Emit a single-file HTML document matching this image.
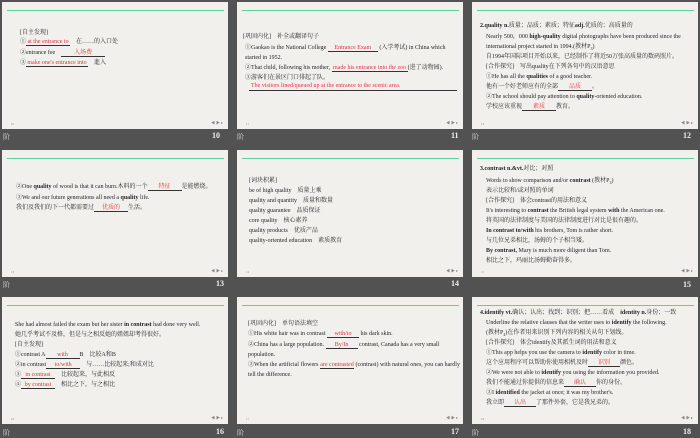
<!DOCTYPE html>
<html><head><meta charset="utf-8"><style>
*{margin:0;padding:0;box-sizing:border-box}
body{width:700px;height:438px;background:#525252;position:relative;overflow:hidden;font-family:"Liberation Serif","Noto Serif CJK SC",serif}
.s{position:absolute;width:226px;height:127px;background:#f1f0ec;overflow:hidden}
.s:before{content:"";position:absolute;left:5px;right:4px;top:8px;height:1px;background:#62cf98}
.t{position:absolute;font-size:6px;line-height:7px;white-space:nowrap;color:#262626}
.t sub{font-size:4px}
.r{color:#e8323a}
.b{display:inline-block;border-bottom:0.8px solid #333;text-align:center;color:#e8323a;line-height:6px}
.nav{position:absolute;right:5px;bottom:3px;font-size:4px;color:#888}
.pg{position:absolute;left:9px;bottom:3px;font-size:3px;color:#888}
.lab{position:absolute;font-size:7px;color:#ddd;font-family:"Liberation Serif","Noto Serif CJK SC",serif}
.num{position:absolute;font-size:8px;font-weight:bold;color:#eee;font-family:"Liberation Serif",serif}
</style></head><body>

<div class="s" style="left:2px;top:2px">
<div class="t" style="left:18px;top:28px">[自主发现]</div>
<div class="t" style="left:18px;top:37px">①<span class="b" style="width:44px">at the entrance to</span>　在……的入口处</div>
<div class="t" style="left:18px;top:48px">②entrance fee　<span class="b" style="width:44px">入场费</span></div>
<div class="t" style="left:18px;top:58px">③<span class="b" style="width:62px">make one's entrance into</span>　進入</div>
<div class="pg">10</div><div class="nav">◀ ▶ ▸</div></div>
<div class="lab" style="left:3px;top:132px">阶</div><div class="num" style="left:212px;top:131px">10</div>

<div class="s" style="left:237px;top:2px">
<div class="t" style="left:6px;top:32px">[巩固内化]　补全或翻译句子</div>
<div class="t" style="left:8px;top:43px">①Gaokao is the National College <span class="b" style="width:50px">Entrance Exam</span> (入学考试) in China which</div>
<div class="t" style="left:8px;top:53px">started in 1952.</div>
<div class="t" style="left:8px;top:63px">②That child, following his mother, <span class="b" style="width:76px">made his entrance into the zoo</span>(进了动物园).</div>
<div class="t" style="left:8px;top:73px">③游客们在景区门口排起了队。</div>
<div class="t r" style="left:12px;top:81px;border-bottom:0.8px solid #333;width:208px;padding-left:2px">The visitors lined/queued up at the entrance to the scenic area.</div>
<div class="pg">11</div><div class="nav">◀ ▶ ▸</div></div>
<div class="lab" style="left:237px;top:132px">阶</div><div class="num" style="left:451px;top:131px">11</div>

<div class="s" style="left:472px;top:2px">
<div class="t" style="left:8px;top:21px"><b>2.quality n.</b>质量；品质；素质；特征<b>adj.</b>优质的；高质量的</div>
<div class="t" style="left:14px;top:32px">Nearly 500，000 <b>high-quality</b> digital photographs have been produced since the</div>
<div class="t" style="left:14px;top:42px">international project started in 1994.(教材P<sub>3</sub>)</div>
<div class="t" style="left:14px;top:52px">自1994年国际项目开始以来，已经制作了将近50万张高质量的数码照片。</div>
<div class="t" style="left:14px;top:62px">[合作探究]　写出quality在下列各句中的汉语意思</div>
<div class="t" style="left:14px;top:72px">①He has all the <b>qualities</b> of a good teacher.</div>
<div class="t" style="left:14px;top:82px">他有一个好老师应有的全部<span class="b" style="width:34px">品质</span>。</div>
<div class="t" style="left:14px;top:92px">②The school should pay attention to <b>quality</b>-oriented education.</div>
<div class="t" style="left:14px;top:102px">学校应该重视<span class="b" style="width:34px">素质</span>教育。</div>
<div class="pg">12</div><div class="nav">◀ ▶ ▸</div></div>
<div class="lab" style="left:472px;top:132px">阶</div><div class="num" style="left:683px;top:131px">12</div>

<div class="s" style="left:2px;top:150px">
<div class="t" style="left:14px;top:34px">②One <b>quality</b> of wood is that it can burn.木料的一个<span class="b" style="width:34px">特征</span>是能燃烧。</div>
<div class="t" style="left:14px;top:45px">③We and our future generations all need a <b>quality</b> life.</div>
<div class="t" style="left:14px;top:55px">我们及我们的下一代都需要过<span class="b" style="width:34px">优质的</span>生活。</div>
<div class="pg">13</div><div class="nav">◀ ▶ ▸</div></div>
<div class="lab" style="left:3px;top:280px">阶</div><div class="num" style="left:216px;top:279px">13</div>

<div class="s" style="left:237px;top:150px">
<div class="t" style="left:12px;top:28px">[词块积累]</div>
<div class="t" style="left:12px;top:38px">be of high quality　质量上乘</div>
<div class="t" style="left:12px;top:48px">quality and quantity　质量和数量</div>
<div class="t" style="left:12px;top:58px">quality guarantee　品质保证</div>
<div class="t" style="left:12px;top:68px">core quality　核心素养</div>
<div class="t" style="left:12px;top:78px">quality products　优质产品</div>
<div class="t" style="left:12px;top:88px">quality-oriented education　素质教育</div>
<div class="pg">14</div><div class="nav">◀ ▶ ▸</div></div>
<div class="num" style="left:451px;top:279px">14</div>

<div class="s" style="left:472px;top:150px">
<div class="t" style="left:8px;top:16px"><b>3.contrast n.&amp;vt.</b>对比；对照</div>
<div class="t" style="left:14px;top:28px">Words to show comparison and/or <b>contrast</b> (教材P<sub>3</sub>)</div>
<div class="t" style="left:14px;top:38px">表示比较和/或对照的单词</div>
<div class="t" style="left:14px;top:48px">[合作探究]　体会contrast的用法和意义</div>
<div class="t" style="left:14px;top:58px">It's interesting to <b>contrast</b> the British legal system <b>with</b> the American one.</div>
<div class="t" style="left:14px;top:68px">将英国的法律制度与美国的法律制度进行对比是很有趣的。</div>
<div class="t" style="left:14px;top:78px"><b>In contrast to/with</b> his brothers, Tom is rather short.</div>
<div class="t" style="left:14px;top:88px">与几位兄弟相比，汤姆的个子相当矮。</div>
<div class="t" style="left:14px;top:98px"><b>By contrast,</b> Mary is much more diligent than Tom.</div>
<div class="t" style="left:14px;top:108px">相比之下，玛丽比汤姆勤奋得多。</div>
<div class="pg">15</div><div class="nav">◀ ▶ ▸</div></div>
<div class="num" style="left:683px;top:280px">15</div>

<div class="s" style="left:2px;top:297px">
<div class="t" style="left:13px;top:25px">She had almost failed the exam but her sister <b>in contrast</b> had done very well.</div>
<div class="t" style="left:13px;top:35px">她几乎考试不及格，但是与之相反她的姐姐却考得很好。</div>
<div class="t" style="left:13px;top:45px">[自主发现]</div>
<div class="t" style="left:13px;top:55px">①contrast A<span class="b" style="width:34px">with</span>B　比较A和B</div>
<div class="t" style="left:13px;top:65px">②in contrast<span class="b" style="width:34px">to/with</span>　与……比较起来;和成对比</div>
<div class="t" style="left:13px;top:75px">③<span class="b" style="width:34px">in contrast</span>　比较起来，与此相反</div>
<div class="t" style="left:13px;top:85px">④<span class="b" style="width:34px">by contrast</span>　相比之下，与之相比</div>
<div class="pg">16</div><div class="nav">◀ ▶ ▸</div></div>
<div class="lab" style="left:3px;top:428px">阶</div><div class="num" style="left:216px;top:427px">16</div>

<div class="s" style="left:237px;top:297px">
<div class="t" style="left:11px;top:24px">[巩固内化]　单句语法填空</div>
<div class="t" style="left:11px;top:34px">①His white hair was in contrast <span class="b" style="width:32px">with/to</span> his dark skin.</div>
<div class="t" style="left:11px;top:45px">②China has a large population. <span class="b" style="width:32px">By/In</span> contrast, Canada has a very small</div>
<div class="t" style="left:11px;top:55px">population.</div>
<div class="t" style="left:11px;top:65px">③When the artificial flowers <span class="b" style="width:34px">are contrasted</span> (contrast) with natural ones, you can hardly</div>
<div class="t" style="left:11px;top:75px">tell the difference.</div>
<div class="pg">17</div><div class="nav">◀ ▶ ▸</div></div>
<div class="lab" style="left:237px;top:428px">阶</div><div class="num" style="left:451px;top:427px">17</div>

<div class="s" style="left:472px;top:297px">
<div class="t" style="left:8px;top:13px"><b>4.identify vt.</b>确认；认出；找到；识别；把……看成　<b>identity n.</b>身份；一致</div>
<div class="t" style="left:14px;top:23px">Underline the relative clauses that the writer uses to <b>identify</b> the following.</div>
<div class="t" style="left:14px;top:33px">(教材P<sub>4</sub>)在作者用来识别下列内容的相关从句下划线。</div>
<div class="t" style="left:14px;top:43px">[合作探究]　体会identify及其派生词的用法和意义</div>
<div class="t" style="left:14px;top:53px">①This app helps you use the camera to <b>identify</b> color in time.</div>
<div class="t" style="left:14px;top:63px">这个应用程序可以帮助你使用相机及时<span class="b" style="width:32px">识别</span>颜色。</div>
<div class="t" style="left:14px;top:73px">②We were not able to <b>identify</b> you using the information you provided.</div>
<div class="t" style="left:14px;top:83px">我们不能通过你提供的信息来<span class="b" style="width:32px">确认</span>你的身份。</div>
<div class="t" style="left:14px;top:93px">③I <b>identified</b> the jacket at once; it was my brother's.</div>
<div class="t" style="left:14px;top:103px">我立即<span class="b" style="width:32px">认出</span>了那件外套，它是我兄弟的。</div>
<div class="pg">18</div><div class="nav">◀ ▶ ▸</div></div>
<div class="lab" style="left:472px;top:428px">阶</div><div class="num" style="left:683px;top:427px">18</div>

</body></html>
